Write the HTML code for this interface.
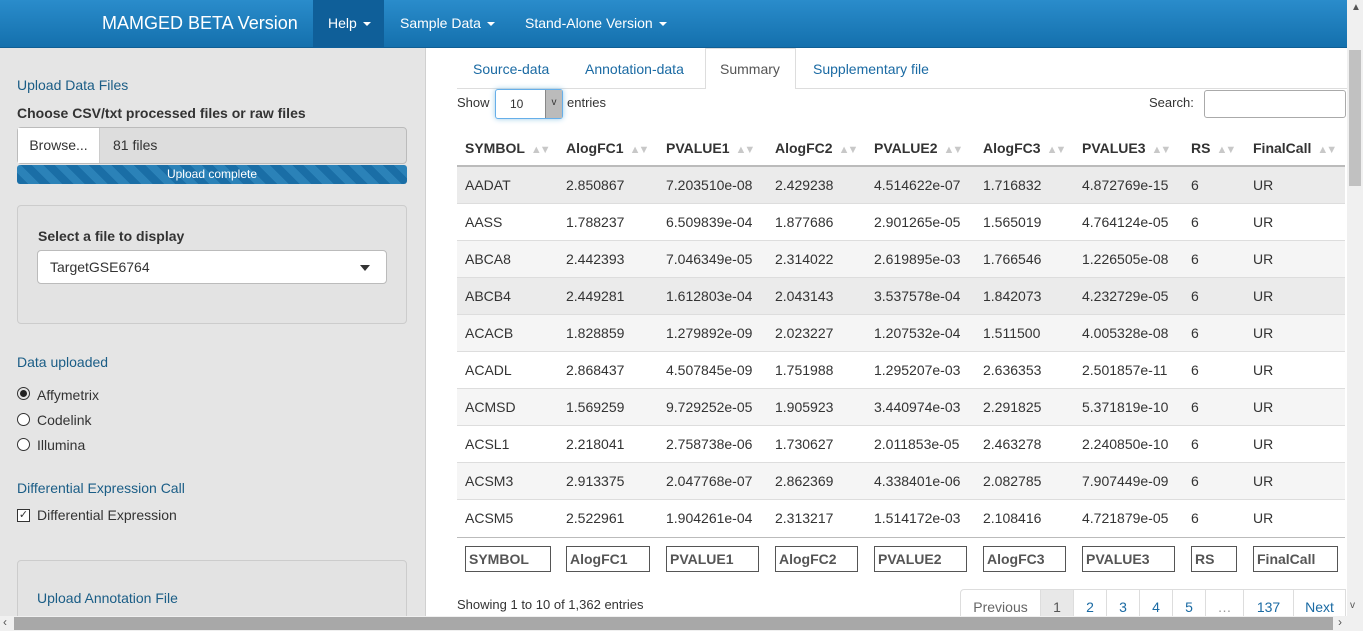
<!DOCTYPE html>
<html><head><meta charset="utf-8"><style>
*{box-sizing:border-box;margin:0;padding:0}
body{width:1363px;height:631px;overflow:hidden;font-family:"Liberation Sans",Arial,sans-serif;font-size:14px;color:#333;position:relative;background:#fff}
.nav{position:absolute;left:0;top:0;width:1347px;height:48px;background:linear-gradient(#2a8ccb,#1470ad);border-bottom:1px solid #105f94}
.nav span{position:absolute;top:0;line-height:46px;color:#fff}
.car{display:inline-block;width:0;height:0;border-left:4px solid transparent;border-right:4px solid transparent;border-top:4px solid #fff;vertical-align:middle;margin-left:6px}
.side{position:absolute;left:0;top:48px;width:426px;height:568px;background:#e5e5e5;border-right:1px solid #d0d0d0}
.abs{position:absolute}
.blue{color:#1a5d86}
.box{position:absolute;left:17px;width:390px;border:1px solid #ccc;border-radius:4px;background:#e3e3e3}
.main{position:absolute;left:427px;top:48px;width:920px;height:568px;background:#fff}
table{position:absolute;left:457px;top:130px;width:888px;border-collapse:collapse}
th{height:36px;text-align:left;font-weight:bold;padding-left:8px;border-bottom:2px solid #bbb;font-size:14px;white-space:nowrap}
td{height:37px;padding-left:8px;border-top:1px solid #ddd;font-size:14px}
tr.g td{background:#f5f5f5}
tr.h td{background:#ebebeb}
.sort{color:#c8c8c8;font-size:11px;margin-left:6px;letter-spacing:-2px}
.f{position:absolute;top:546px;height:26px;border:1px solid #555;font-weight:bold;font-size:14px;color:#555;padding:4px 3px}
.pg{position:absolute;top:589px;height:30px;border:1px solid #ddd;border-left:none;line-height:34px;text-align:center;color:#1a6aa3}
</style></head><body>
<div class="nav">
<span style="left:102px;font-size:18px">MAMGED BETA Version</span>
<div class="abs" style="left:313px;top:0;width:71px;height:48px;background:#0f5f99"></div>
<span style="left:328px">Help<i class="car"></i></span>
<span style="left:400px">Sample Data<i class="car"></i></span>
<span style="left:525px">Stand-Alone Version<i class="car"></i></span>
</div>
<div class="side">
<div class="abs blue" style="left:17px;top:29px">Upload Data Files</div>
<div class="abs" style="left:17px;top:57px;font-weight:bold">Choose CSV/txt processed files or raw files</div>
<div class="abs" style="left:17px;top:79px;width:390px;height:37px;border:1px solid #bbb;border-radius:4px;background:#ddd"></div>
<div class="abs" style="left:18px;top:80px;width:82px;height:35px;background:#fff;border-right:1px solid #ccc;line-height:35px;text-align:center">Browse...</div>
<div class="abs" style="left:113px;top:80px;line-height:35px">81 files</div>
<div class="abs" style="left:17px;top:117px;width:390px;height:19px;border-radius:3px;background:repeating-linear-gradient(45deg,#1a6ea6 0 8px,#2b82b8 8px 16px);color:#fff;font-size:12px;text-align:center;line-height:19px">Upload complete</div>
<div class="box" style="top:157px;height:119px"></div>
<div class="abs" style="left:38px;top:180px;font-weight:bold">Select a file to display</div>
<div class="abs" style="left:37px;top:202px;width:350px;height:34px;background:#fff;border:1px solid #bbb;border-radius:4px;padding:8px 12px">TargetGSE6764<span style="position:absolute;right:16px;top:14px;border:5px solid transparent;border-top:6px solid #333;border-bottom:0"></span></div>
<div class="abs blue" style="left:17px;top:306px">Data uploaded</div>
<div class="abs" style="left:17px;top:339px;width:13px;height:13px;border:1px solid #333;border-radius:50%"><div style="margin:2px;width:7px;height:7px;border-radius:50%;background:#222"></div></div>
<div class="abs" style="left:37px;top:339px">Affymetrix</div>
<div class="abs" style="left:17px;top:365px;width:13px;height:13px;border:1px solid #333;border-radius:50%;background:#fff"></div>
<div class="abs" style="left:37px;top:364px">Codelink</div>
<div class="abs" style="left:17px;top:390px;width:13px;height:13px;border:1px solid #333;border-radius:50%;background:#fff"></div>
<div class="abs" style="left:37px;top:389px">Illumina</div>
<div class="abs blue" style="left:17px;top:432px">Differential Expression Call</div>
<div class="abs" style="left:17px;top:461px;width:13px;height:13px;border:1px solid #333;background:#fff;font-size:11px;line-height:11px;text-align:center">✓</div>
<div class="abs" style="left:37px;top:459px">Differential Expression</div>
<div class="box" style="top:512px;height:70px"></div>
<div class="abs blue" style="left:37px;top:542px">Upload Annotation File</div>
</div>
<div class="main"></div>
<div class="abs" style="left:457px;top:88px;width:890px;border-top:1px solid #ddd"></div>
<div class="abs" style="left:705px;top:48px;width:91px;height:41px;background:#fff;border:1px solid #ddd;border-bottom:none"></div>
<div class="abs" style="left:473px;top:61px;color:#1a6aa3">Source-data</div>
<div class="abs" style="left:585px;top:61px;color:#1a6aa3">Annotation-data</div>
<div class="abs" style="left:720px;top:61px;color:#555">Summary</div>
<div class="abs" style="left:813px;top:61px;color:#1a6aa3">Supplementary file</div>
<div class="abs" style="left:457px;top:95px;font-size:13px">Show</div>
<div class="abs" style="left:495px;top:89px;width:68px;height:30px;border:1px solid #66afe9;box-shadow:0 0 6px #9ccbe8;border-radius:3px;background:#fff;font-size:12px;padding:7px 14px">10<div style="position:absolute;right:0;top:0;width:17px;height:28px;background:#bbb;border-left:1px solid #888;text-align:center;font-size:10px;line-height:26px">v</div></div>
<div class="abs" style="left:567px;top:95px;font-size:13px">entries</div>
<div class="abs" style="left:1149px;top:95px;font-size:13px">Search:</div>
<div class="abs" style="left:1204px;top:90px;width:142px;height:28px;border:1px solid #aaa;border-radius:3px"></div>
<table>
<tr><th style="width:101px">SYMBOL<span class="sort">▲▼</span></th><th style="width:100px">AlogFC1<span class="sort">▲▼</span></th><th style="width:109px">PVALUE1<span class="sort">▲▼</span></th><th style="width:99px">AlogFC2<span class="sort">▲▼</span></th><th style="width:109px">PVALUE2<span class="sort">▲▼</span></th><th style="width:99px">AlogFC3<span class="sort">▲▼</span></th><th style="width:109px">PVALUE3<span class="sort">▲▼</span></th><th style="width:62px">RS<span class="sort">▲▼</span></th><th>FinalCall<span class="sort">▲▼</span></th></tr>
<tr class="h"><td>AADAT</td><td>2.850867</td><td>7.203510e-08</td><td>2.429238</td><td>4.514622e-07</td><td>1.716832</td><td>4.872769e-15</td><td>6</td><td>UR</td></tr>
<tr><td>AASS</td><td>1.788237</td><td>6.509839e-04</td><td>1.877686</td><td>2.901265e-05</td><td>1.565019</td><td>4.764124e-05</td><td>6</td><td>UR</td></tr>
<tr class="g"><td>ABCA8</td><td>2.442393</td><td>7.046349e-05</td><td>2.314022</td><td>2.619895e-03</td><td>1.766546</td><td>1.226505e-08</td><td>6</td><td>UR</td></tr>
<tr class="h"><td>ABCB4</td><td>2.449281</td><td>1.612803e-04</td><td>2.043143</td><td>3.537578e-04</td><td>1.842073</td><td>4.232729e-05</td><td>6</td><td>UR</td></tr>
<tr class="g"><td>ACACB</td><td>1.828859</td><td>1.279892e-09</td><td>2.023227</td><td>1.207532e-04</td><td>1.511500</td><td>4.005328e-08</td><td>6</td><td>UR</td></tr>
<tr><td>ACADL</td><td>2.868437</td><td>4.507845e-09</td><td>1.751988</td><td>1.295207e-03</td><td>2.636353</td><td>2.501857e-11</td><td>6</td><td>UR</td></tr>
<tr class="g"><td>ACMSD</td><td>1.569259</td><td>9.729252e-05</td><td>1.905923</td><td>3.440974e-03</td><td>2.291825</td><td>5.371819e-10</td><td>6</td><td>UR</td></tr>
<tr><td>ACSL1</td><td>2.218041</td><td>2.758738e-06</td><td>1.730627</td><td>2.011853e-05</td><td>2.463278</td><td>2.240850e-10</td><td>6</td><td>UR</td></tr>
<tr class="g"><td>ACSM3</td><td>2.913375</td><td>2.047768e-07</td><td>2.862369</td><td>4.338401e-06</td><td>2.082785</td><td>7.907449e-09</td><td>6</td><td>UR</td></tr>
<tr><td>ACSM5</td><td>2.522961</td><td>1.904261e-04</td><td>2.313217</td><td>1.514172e-03</td><td>2.108416</td><td>4.721879e-05</td><td>6</td><td>UR</td></tr>
</table>
<div class="abs" style="left:457px;top:537px;width:888px;border-top:1px solid #bbb"></div>
<div class="f" style="left:465px;width:86px">SYMBOL</div>
<div class="f" style="left:566px;width:84px">AlogFC1</div>
<div class="f" style="left:666px;width:93px">PVALUE1</div>
<div class="f" style="left:775px;width:83px">AlogFC2</div>
<div class="f" style="left:874px;width:93px">PVALUE2</div>
<div class="f" style="left:983px;width:83px">AlogFC3</div>
<div class="f" style="left:1082px;width:93px">PVALUE3</div>
<div class="f" style="left:1191px;width:46px">RS</div>
<div class="f" style="left:1253px;width:85px">FinalCall</div>
<div class="abs" style="left:457px;top:597px;font-size:13px">Showing 1 to 10 of 1,362 entries</div>
<div class="pg" style="left:960px;width:81px;border-left:1px solid #ddd;color:#666;border-radius:4px 0 0 0">Previous</div>
<div class="pg" style="left:1041px;width:33px;background:#e8e8e8;color:#555">1</div>
<div class="pg" style="left:1074px;width:33px">2</div>
<div class="pg" style="left:1107px;width:33px">3</div>
<div class="pg" style="left:1140px;width:33px">4</div>
<div class="pg" style="left:1173px;width:33px">5</div>
<div class="pg" style="left:1206px;width:38px;color:#999">…</div>
<div class="pg" style="left:1244px;width:50px">137</div>
<div class="pg" style="left:1294px;width:52px">Next</div>
<div class="abs" style="left:1347px;top:0;width:16px;height:616px;background:#f0f0f0"></div>
<div class="abs" style="left:1349px;top:50px;width:12px;height:136px;background:#c1c1c1"></div>
<div class="abs" style="left:1351px;top:2px;font-size:10px;color:#555">▲</div>
<div class="abs" style="left:1350px;top:600px;font-size:10px;color:#555">v</div>
<div class="abs" style="left:0;top:616px;width:1363px;height:15px;background:#f0f0f0"></div>
<div class="abs" style="left:14px;top:617px;width:1319px;height:13px;background:#a8a8a8"></div>
<div class="abs" style="left:3px;top:615px;font-size:12px;color:#555">‹</div>
<div class="abs" style="left:1338px;top:615px;font-size:12px;color:#555">›</div>
</body></html>
